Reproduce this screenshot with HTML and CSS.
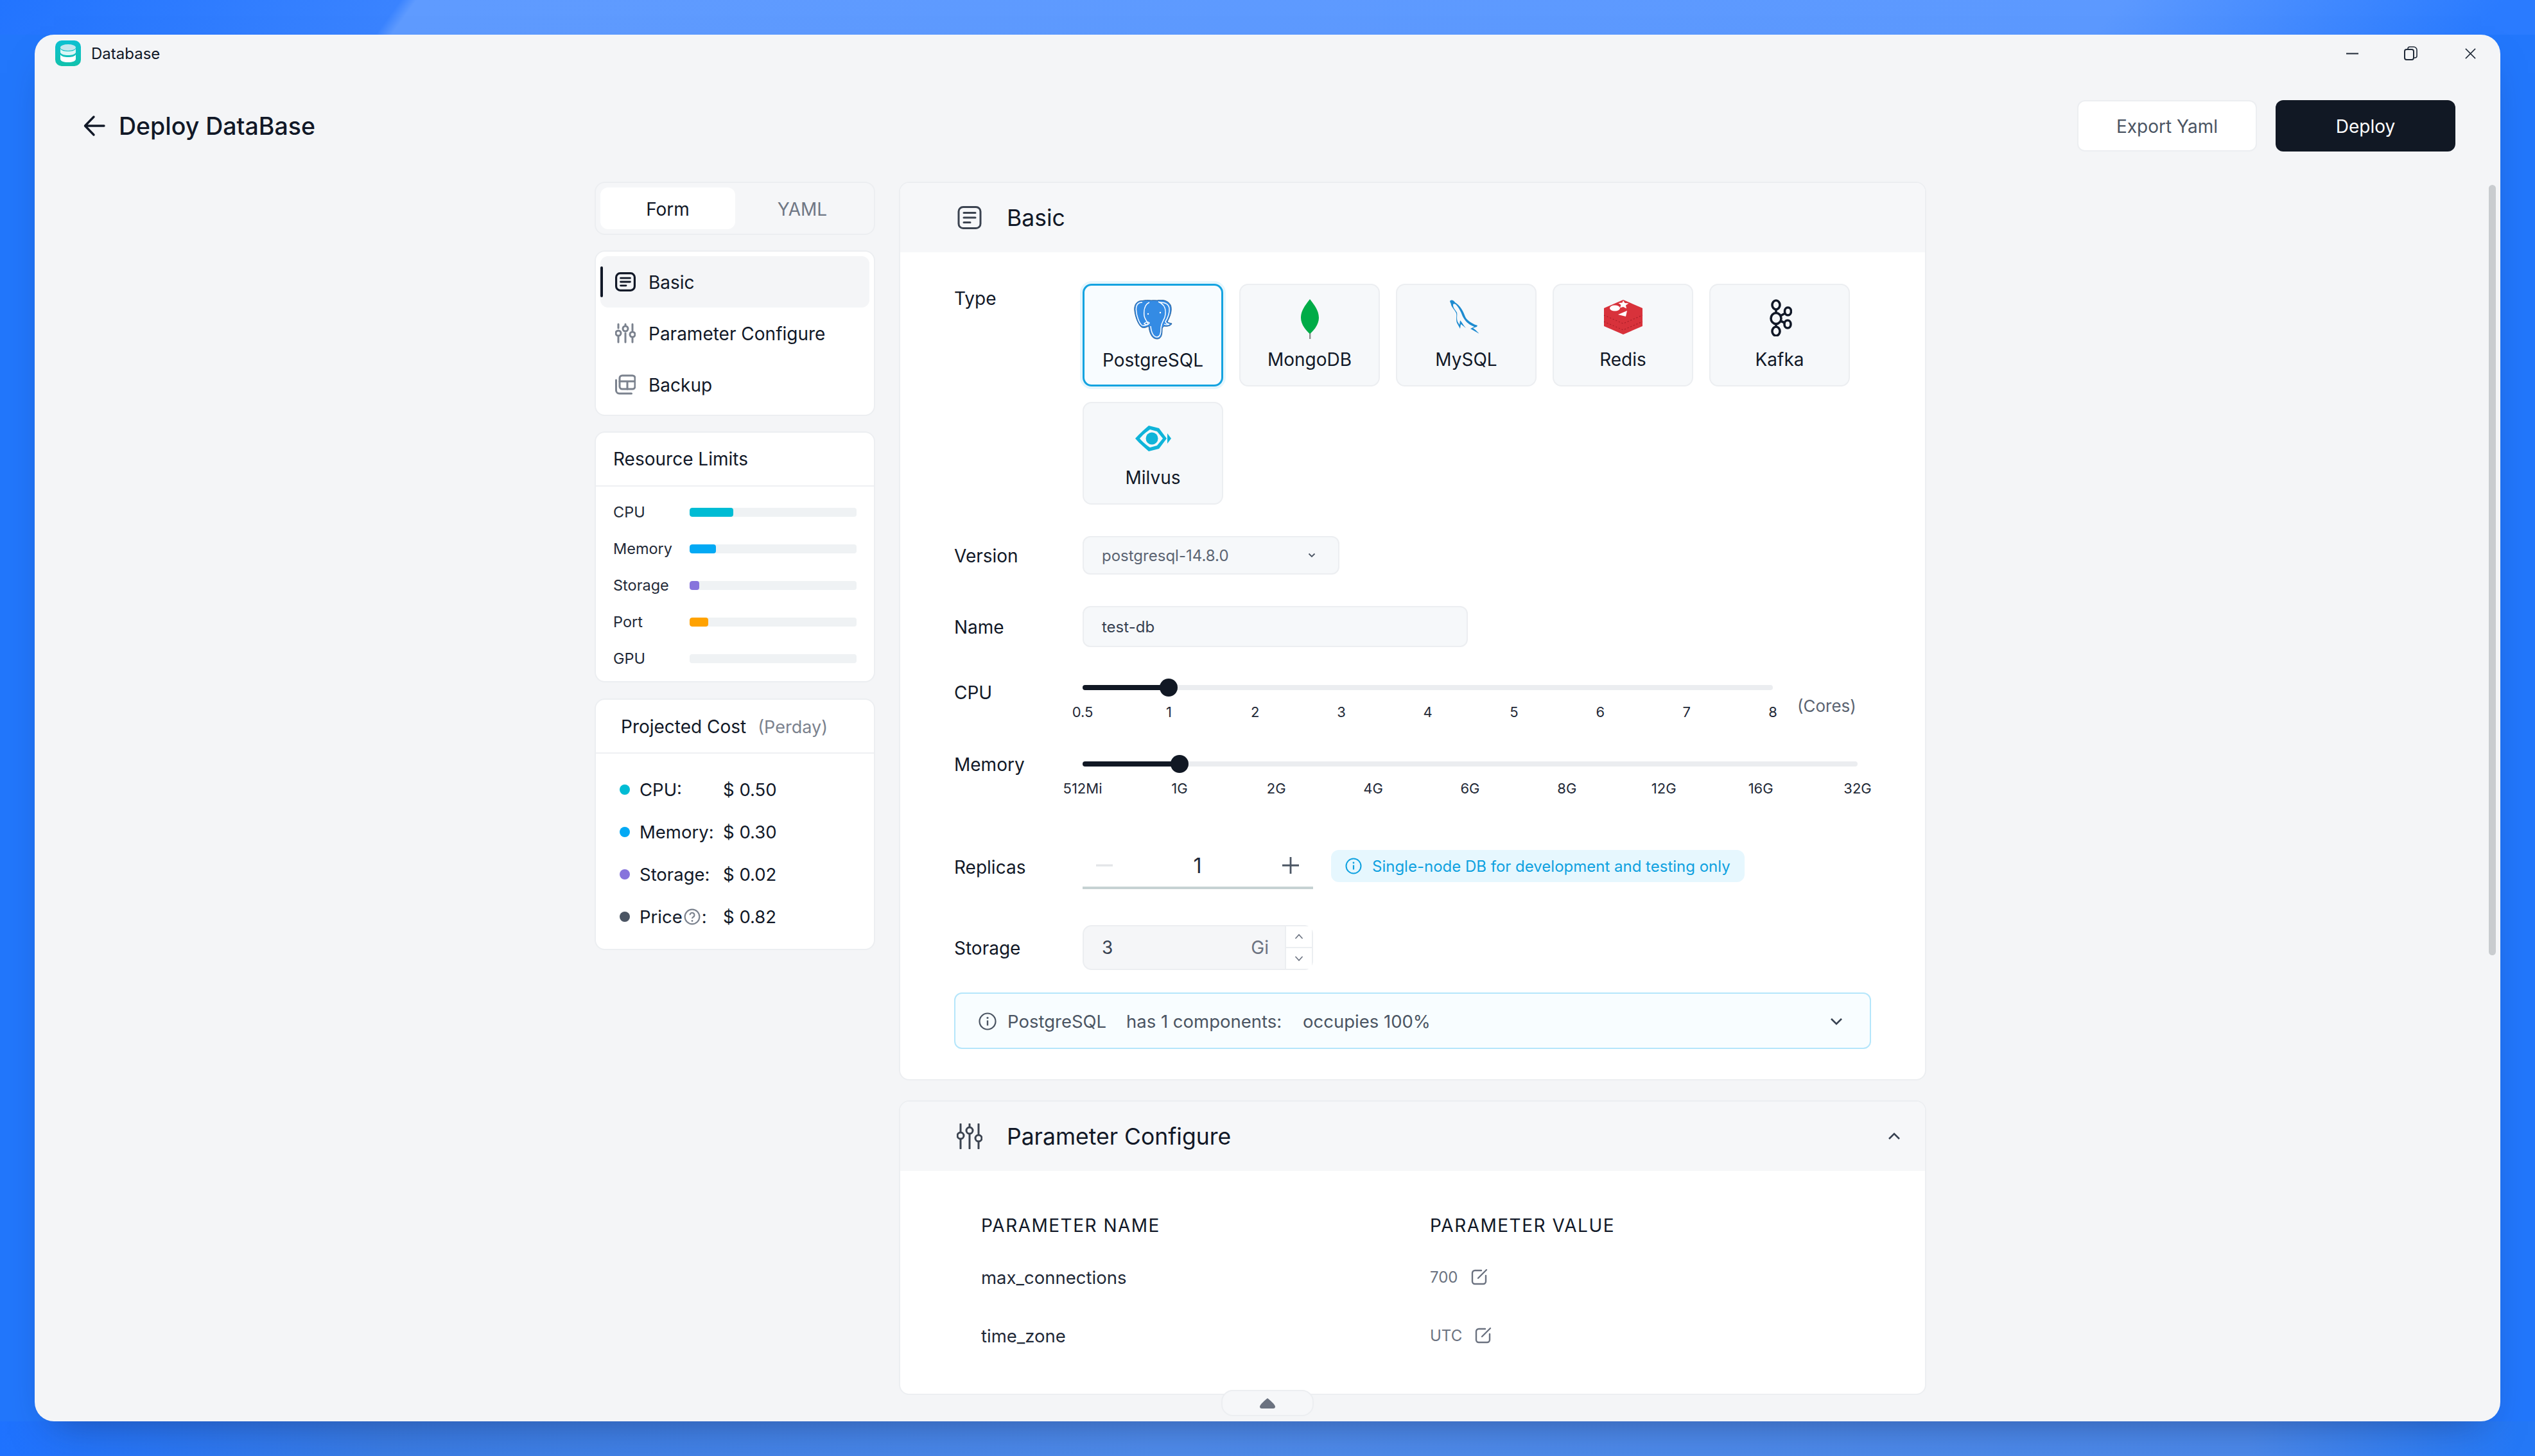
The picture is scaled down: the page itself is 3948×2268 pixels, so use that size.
FILE: index.html
```html
<!DOCTYPE html>
<html lang="en">
<head>
<meta charset="utf-8">
<title>Database</title>
<link rel="stylesheet" href="styles.css">
</head>
<body>
<div class="window">
  <div class="titlebar">
    <svg class="logo" viewBox="0 0 40 40"><defs><linearGradient id="lg" x1="0" y1="0" x2="0" y2="1"><stop offset="0" stop-color="#0cc0d2"/><stop offset="1" stop-color="#12c2ac"/></linearGradient></defs><rect width="40" height="40" rx="10" fill="url(#lg)"/><ellipse cx="20" cy="11" rx="12" ry="5" fill="#c5e6ee"/><path d="M8 13c2 3 6 4 12 4s10-1 12-4v6c-2 3-6 4-12 4s-10-1-12-4z" fill="#fff" opacity=".85"/><path d="M8 22c2 3 6 4 12 4s10-1 12-4v7c0 3-5 5-12 5s-12-2-12-5z" fill="#fff"/></svg>
    <span class="app-name">Database</span>
    <div class="win-controls">
      <svg class="wc wc-min" viewBox="0 0 20 20"><path d="M0 10h20" stroke="#1f2937" stroke-width="2"/></svg>
      <svg class="wc wc-res" viewBox="0 0 22 22"><rect x="1" y="5" width="14" height="16" rx="3" fill="none" stroke="#1f2937" stroke-width="2"/><path d="M6 5V4a3 3 0 0 1 3-3h6a5 5 0 0 1 5 5v9a3 3 0 0 1-3 3h-2" fill="none" stroke="#1f2937" stroke-width="1.6"/></svg>
      <svg class="wc wc-close" viewBox="0 0 20 20"><path d="M2 2l16 16M18 2L2 18" stroke="#1f2937" stroke-width="1.6"/></svg>
    </div>
  </div>

  <header class="page-head">
    <svg class="back" viewBox="0 0 34 34"><path d="M32 17H3M16 3L2.500 17 16 31" fill="none" stroke="#111827" stroke-width="3.400" stroke-linecap="round" stroke-linejoin="round"/></svg>
    <h1 class="page-title">Deploy DataBase</h1>
    <div class="head-actions">
      <button class="btn btn-light">Export Yaml</button>
      <button class="btn btn-dark">Deploy</button>
    </div>
  </header>

  <main class="layout">
    <aside class="side">
      <div class="tabs">
        <div class="tab tab-on">Form</div>
        <div class="tab">YAML</div>
      </div>

      <nav class="panel nav">
        <div class="nav-item nav-on">
          <svg class="nav-icon" viewBox="0 0 30 30"><rect x="1.500" y="2.500" width="27" height="25" rx="6" fill="none" stroke="#111827" stroke-width="3"/><path d="M8 9.500h14M8 15h14M8 20.500h8" stroke="#111827" stroke-width="2.600" stroke-linecap="round"/></svg>
          <span>Basic</span>
        </div>
        <div class="nav-item">
          <svg class="nav-icon" viewBox="0 0 32 32"><g fill="none" stroke="#7b828e" stroke-width="3" stroke-linecap="round"><path d="M5 2v6M16 2v2M27 2v10M5 22v8M16 16v14M27 24v6"/><circle cx="5" cy="16" r="4"/><circle cx="16" cy="9" r="4"/><circle cx="27" cy="18" r="4"/></g></svg>
          <span>Parameter Configure</span>
        </div>
        <div class="nav-item">
          <svg class="nav-icon" viewBox="0 0 32 32"><g fill="none" stroke="#7b828e" stroke-width="3" stroke-linejoin="round" stroke-linecap="round"><rect x="7" y="2" width="24" height="21" rx="4"/><path d="M7 11h24M19 11v12"/><path d="M1.500 9v16a5 5 0 0 0 5 5h19"/></g></svg>
          <span>Backup</span>
        </div>
      </nav>

      <section class="panel limits">
        <div class="panel-title limits-title">Resource Limits</div>
        <div class="limit-list">
          <div class="limit"><span class="limit-name">CPU</span><div class="bar"><i class="c-cpu" style="width:68px"></i></div></div>
          <div class="limit"><span class="limit-name">Memory</span><div class="bar"><i class="c-mem" style="width:41px"></i></div></div>
          <div class="limit"><span class="limit-name">Storage</span><div class="bar"><i class="c-sto" style="width:15px"></i></div></div>
          <div class="limit"><span class="limit-name">Port</span><div class="bar"><i class="c-port" style="width:29px"></i></div></div>
          <div class="limit"><span class="limit-name">GPU</span><div class="bar"></div></div>
        </div>
      </section>

      <section class="panel cost">
        <div class="panel-title cost-title">Projected Cost <span class="per">(Perday)</span></div>
        <div class="cost-list">
          <div class="cost-row"><b class="dot c-cpu"></b><span class="cost-name">CPU:</span><span>$ 0.50</span></div>
          <div class="cost-row"><b class="dot c-mem"></b><span class="cost-name">Memory:</span><span>$ 0.30</span></div>
          <div class="cost-row"><b class="dot c-sto"></b><span class="cost-name">Storage:</span><span>$ 0.02</span></div>
          <div class="cost-row"><b class="dot c-price"></b><span class="cost-name">Price<svg class="help" viewBox="0 0 24 24"><circle cx="12" cy="12" r="10.500" fill="none" stroke="#7b828e" stroke-width="2"/><path d="M8.800 9.500a3.200 3.200 0 1 1 4.900 2.700c-1.100.7-1.700 1.300-1.700 2.400" fill="none" stroke="#7b828e" stroke-width="2"/><circle cx="12" cy="18" r="1.300" fill="#7b828e"/></svg>:</span><span>$ 0.82</span></div>
        </div>
      </section>
    </aside>

    <div class="content">
      <section class="card card-basic">
        <div class="card-head">
          <svg class="head-icon" viewBox="0 0 40 40"><rect x="3" y="3.500" width="34" height="33" rx="7" fill="none" stroke="#3b4350" stroke-width="3"/><path d="M11 12.500h18M11 20h18M11 27.500h10" stroke="#3b4350" stroke-width="3" stroke-linecap="round"/></svg>
          <h2 class="card-title">Basic</h2>
        </div>
        <div class="form">
          <div class="row row-type">
            <label class="lbl lbl-type">Type</label>
            <div class="tiles">
              <div class="tile tile-on">
                <svg class="ti" width="60" height="62" viewBox="0 0 60 62"><path d="M13 1.500C5 1 .5 7 .8 15 1.200 24 6 38 11 42c4 3 8 1 12-1 1 9 4 20 13 20 7 0 8-7 8-15 0-2 1-4 3-5 6 1 11-1 12-4-3-1-6-1-7-3 5-9 8-19 5-26-4-7-13-9-21-7-3-.2-6-.5-9 0-5-.7-10-.5-14 .5z" fill="#348be4" stroke="#2f5f92" stroke-width="1"/><g fill="none" stroke="#fff" stroke-width="1.500"><path d="M13 4C5 4 3 10 3.500 16 4 25 8 36 12 39.500c3 2 7 0 10-1.500M24 4c-7 3-9 12-8 21 .6 5 5 9 6 13"/><path d="M38 3c10 4 13 13 10 24-2 6-6 9-6 18 0 7-1 13-6 13-6 0-9-8-10-17"/><path d="M40 4c7 0 14 2 15 9 1 6-2 15-6 21 1 3 4 4 6 4-2 1-6 1-8 0"/><path d="M16 37c3-3 6-3 8-1-1 3-5 4-8 1z"/></g><circle cx="22" cy="22" r="1.200" fill="#fff"/><circle cx="41" cy="20" r="1.200" fill="#fff"/></svg>
                <span>PostgreSQL</span>
              </div>
              <div class="tile">
                <svg class="ti" width="30" height="62" viewBox="0 0 30 62"><path d="M14 50h2.400v12H14z" fill="#8b8f8c"/><path d="M15 0C21 8 29 17 29 29c0 10-7 19-14 25C8 48 1 39 1 29 1 17 9 8 15 0z" fill="#00ac47"/></svg>
                <span>MongoDB</span>
              </div>
              <div class="tile">
                <svg class="ti" width="56" height="56" viewBox="0 0 56 56"><path d="M2 3C5 0 8 2 10 5c7 4 12 12 15 20 2 6 6 9 11 12 3 2 6 3 9 4l-1 2-6 2 4 3 6 6-7-4-7-4 6-3c-8-3-14-8-18-16-2-5-5-13-11-19-2-1-4-1-4 1 0 5 4 8 6 12 1 4-1 9 1 14l3 5 1-7c3 3 5 8 9 12-4-3-6-5-8-6l-1 7-5-9c-2-5 0-10-1-15-2-5-7-9-8-13-.3-2-.6-3-1-3z" fill="#1d8bd0"/></svg>
                <span>MySQL</span>
              </div>
              <div class="tile">
                <svg class="ti" width="62" height="56" viewBox="0 0 62 56"><path d="M31 1 61 14v28L31 55 1 42V14z" fill="#d8323b"/><path d="M1 25l30 13 30-13M1 35l30 13 30-13" fill="none" stroke="#a81f28" stroke-width="1.200" stroke-dasharray="2 3"/><ellipse cx="18" cy="14" rx="8" ry="4.500" fill="#fff"/><path d="M31 2l2.500 4 6 .5-4.500 3 1 5-5-2.500-5 1.500 1.500-4.500-4-3 6-.5z" fill="#fff"/><path d="M37 18l-2 9-12-3z" fill="#fff"/></svg>
                <span>Redis</span>
              </div>
              <div class="tile">
                <svg class="ti" width="38" height="58" viewBox="0 0 38 58"><g fill="none" stroke="#111827" stroke-width="3.600"><ellipse cx="13" cy="9" rx="6" ry="7"/><ellipse cx="31.500" cy="19" rx="5" ry="6"/><ellipse cx="13" cy="30" rx="8" ry="8.500"/><ellipse cx="31" cy="39" rx="5" ry="6"/><ellipse cx="13" cy="50" rx="6" ry="7"/><path d="M13 16v5M13 39v5M20 26l7-4M20 34l7 3"/></g></svg>
                <span>Kafka</span>
              </div>
              <div class="tile">
                <svg class="ti ti-milvus" width="58" height="42" viewBox="0 0 58 42"><path d="M22 1 38 5 50 21 38 37l-16 4C14 34 7 28 1 21 7 14 14 8 22 1z" fill="#0fb4d9"/><path d="M24 7 35 10 44 21 35 32 24 35C18 31 12 26 8 21 12 16 18 11 24 7z" fill="#f6f8fa"/><circle cx="27" cy="21" r="9.500" fill="#0fb4d9"/><path d="M51 13l6 8-6 8z" fill="#0fb4d9"/></svg>
                <span>Milvus</span>
              </div>
            </div>
          </div>

          <div class="row row-version">
            <label class="lbl">Version</label>
            <div class="select"><span>postgresql-14.8.0</span>
              <svg class="chev-s" viewBox="0 0 12 8"><path d="M1.500 1.500 6 6l4.500-4.500" fill="none" stroke="#4b5563" stroke-width="1.800"/></svg>
            </div>
          </div>

          <div class="row row-name">
            <label class="lbl">Name</label>
            <div class="input">test-db</div>
          </div>

          <div class="row row-cpu">
            <label class="lbl lbl-slider">CPU</label>
            <div class="slider slider-cpu">
              <div class="track"><i class="fill" style="width:12.5%"></i><b class="thumb" style="left:12.5%"></b></div>
              <div class="marks"><span>0.5</span><span>1</span><span>2</span><span>3</span><span>4</span><span>5</span><span>6</span><span>7</span><span>8</span></div>
            </div>
            <span class="unit">(Cores)</span>
          </div>

          <div class="row row-mem">
            <label class="lbl lbl-slider-mem">Memory</label>
            <div class="slider slider-mem">
              <div class="track"><i class="fill" style="width:12.5%"></i><b class="thumb" style="left:12.5%"></b></div>
              <div class="marks"><span>512Mi</span><span>1G</span><span>2G</span><span>4G</span><span>6G</span><span>8G</span><span>12G</span><span>16G</span><span>32G</span></div>
            </div>
          </div>

          <div class="row row-rep">
            <label class="lbl lbl-rep">Replicas</label>
            <div class="stepper">
              <svg class="st-ic" viewBox="0 0 24 24"><path d="M0 12h24" stroke="#e3e5e8" stroke-width="3"/></svg>
              <span class="st-val">1</span>
              <svg class="st-ic" viewBox="0 0 28 28"><path d="M0 14h28M14 0v28" stroke="#4b5563" stroke-width="3"/></svg>
            </div>
            <div class="pill">
              <svg class="pill-ic" viewBox="0 0 26 26"><circle cx="13" cy="13" r="11.500" fill="none" stroke="#0ea1e0" stroke-width="2"/><path d="M13 11.500v7" stroke="#0ea1e0" stroke-width="2.200"/><circle cx="13" cy="8" r="1.400" fill="#0ea1e0"/></svg>
              <span>Single-node DB for development and testing only</span>
            </div>
          </div>

          <div class="row row-sto">
            <label class="lbl">Storage</label>
            <div class="numbox">
              <span class="num-val">3</span><span class="num-unit">Gi</span>
              <div class="spin">
                <div class="spin-btn"><svg viewBox="0 0 14 10"><path d="M1.500 8 7 2l5.500 6" fill="none" stroke="#6b7280" stroke-width="1.600"/></svg></div>
                <div class="spin-btn"><svg viewBox="0 0 14 10"><path d="M1.500 2 7 8l5.500-6" fill="none" stroke="#6b7280" stroke-width="1.600"/></svg></div>
              </div>
            </div>
          </div>

          <div class="notice">
            <svg class="notice-ic" viewBox="0 0 28 28"><circle cx="14" cy="14" r="12.500" fill="none" stroke="#4b5563" stroke-width="2.200"/><path d="M14 12.500v8" stroke="#4b5563" stroke-width="2.400"/><circle cx="14" cy="8.500" r="1.600" fill="#4b5563"/></svg>
            <span class="n1">PostgreSQL</span><span class="n2">has 1 components:</span><span class="n3">occupies 100%</span>
            <svg class="notice-chev" viewBox="0 0 20 12"><path d="M2 2l8 8 8-8" fill="none" stroke="#374151" stroke-width="2.600"/></svg>
          </div>
        </div>
      </section>

      <section class="card card-param">
        <div class="card-head">
          <svg class="head-icon" viewBox="0 0 40 40"><g fill="none" stroke="#3b4350" stroke-width="3" stroke-linecap="round"><path d="M6 1v12M20 1v4M34 1v15M6 25v14M20 17v22M34 30v9"/><circle cx="6" cy="19" r="5"/><circle cx="20" cy="11" r="5"/><circle cx="34" cy="23" r="5"/></g></svg>
          <h2 class="card-title">Parameter Configure</h2>
          <svg class="collapse" viewBox="0 0 20 12"><path d="M2 10l8-8 8 8" fill="none" stroke="#374151" stroke-width="2.600"/></svg>
        </div>
        <div class="ptable">
          <div class="pth">Parameter Name</div><div class="pth">Parameter Value</div>
          <div class="ptd">max_connections</div>
          <div class="ptv"><span>700</span><svg class="edit" viewBox="0 0 26 26"><path d="M16 3H6a4 4 0 0 0-4 4v13a4 4 0 0 0 4 4h13a4 4 0 0 0 4-4V11" fill="none" stroke="#6b7280" stroke-width="2.400" stroke-linecap="round"/><path d="M11 15 24 2" stroke="#6b7280" stroke-width="2.400" stroke-linecap="round"/></svg></div>
          <div class="ptd">time_zone</div>
          <div class="ptv"><span>UTC</span><svg class="edit" viewBox="0 0 26 26"><path d="M16 3H6a4 4 0 0 0-4 4v13a4 4 0 0 0 4 4h13a4 4 0 0 0 4-4V11" fill="none" stroke="#6b7280" stroke-width="2.400" stroke-linecap="round"/><path d="M11 15 24 2" stroke="#6b7280" stroke-width="2.400" stroke-linecap="round"/></svg></div>
        </div>
      </section>
    </div>
  </main>

  <div class="scrollbar"></div>
  <div class="toggle"><svg viewBox="0 0 24 16"><path d="M12 0C15 2 24 10 24 13c0 2-1 3-3 3H3c-2 0-3-1-3-3C0 10 9 2 12 0z" fill="#6b7280"/></svg></div>
</div>
</body>
</html>
```
FILE: styles.css
```css
* { box-sizing: border-box; }
html, body { margin: 0; width: 3948px; height: 2268px; overflow: hidden; }
body {
  font-family: Inter, "Liberation Sans", sans-serif;
  color: #111827;
  padding: 54px;
  background:
    linear-gradient(to right, #1e72ff 0, #3a7ce4 600px, #4f8bea 1800px, #4c89ea 3500px, #2478f6 3920px) left bottom / 100% 54px no-repeat,
    linear-gradient(126deg, #2274ff 0, #3a83ff 505px, #5f9bff 525px, #5c99ff 2670px, #2a7bff 3155px) left top / 100% 54px no-repeat,
    #2277fc;
}
.window {
  position: relative;
  width: 3840px;
  height: 2160px;
  background: #f4f5f7;
  border-radius: 30px;
  overflow: hidden;
  box-shadow: 0 30px 60px -30px rgba(20, 40, 90, .5);
}
.titlebar { display: flex; align-items: center; height: 58px; padding: 0 37px 0 32px; }
.logo { width: 40px; height: 40px; }
.app-name { margin-left: 16px; font-size: 24px; }
.win-controls { margin-left: auto; display: flex; align-items: center; }
.wc { display: block; }
.wc-min { width: 19px; height: 19px; }
.wc-res { width: 22px; height: 22px; margin-left: 71px; }
.wc-close { width: 19px; height: 19px; margin-left: 72px; }

.page-head { display: flex; align-items: center; height: 80px; margin-top: 44px; padding: 0 70px 0 76px; }
.back { width: 34px; height: 34px; }
.page-title { margin: 2px 0 0 21px; font-size: 37.500px; line-height: 50px; font-weight: 500; }
.head-actions { margin-left: auto; display: flex; gap: 29px; }
.btn { width: 280px; height: 80px; padding-top: 2px; border-radius: 12px; font: 400 28px Inter, sans-serif; }
.btn-light { background: #fff; color: #4b5563; border: 2px solid #eceef1; }
.btn-dark { background: #111824; color: #fff; border: 0; }

.layout { display: flex; gap: 37px; margin-top: 47px; padding-left: 872px; align-items: flex-start; }
.side { width: 437px; display: flex; flex-direction: column; }

.tabs { display: flex; height: 83px; padding: 7px; background: #f5f6f8; border: 2px solid #eceef1; border-radius: 16px; }
.tab { flex: 1; display: flex; align-items: center; justify-content: center; padding-top: 2px; font-size: 28px; font-weight: 400; color: #6f7785; border-radius: 12px; }
.tab-on { flex: none; width: 210px; background: #fff; color: #111827; }
.panel { background: #fff; border: 2px solid #eceef1; border-radius: 16px; margin-top: 24px; }
.nav { height: 258px; padding: 7px; }
.nav-item { position: relative; display: flex; align-items: center; height: 80px; padding: 2px 0 0 23px; font-size: 28px; font-weight: 400; border-radius: 12px; }
.nav-item span { margin-left: 20px; }
.nav-icon { width: 32px; height: 32px; margin-top: -2px; }
.nav-on { background: #f4f5f7; }
.nav-on::before { content: ""; position: absolute; left: 0; top: 16px; width: 4px; height: 48px; border-radius: 2px; background: #111827; }

.panel-title { font-size: 28px; font-weight: 400; display: flex; align-items: center; border-bottom: 2px solid #eef0f3; }
.limits { height: 391px; }
.limits-title { height: 84px; padding-left: 27px; }
.limit-list { padding-top: 11px; }
.limit { display: flex; align-items: center; height: 57px; padding-left: 27px; }
.limit-name { width: 119px; font-size: 23.500px; color: #1f2937; }
.bar { width: 260px; height: 14px; border-radius: 4px; background: #eff2f4; overflow: hidden; }
.bar i { display: block; height: 100%; border-radius: 4px; }
.c-cpu { background: #00bcd4; }
.c-mem { background: #03a9f4; }
.c-sto { background: #8774dc; }
.c-port { background: #ffa200; }
.c-price { background: #4b5563; }

.cost { height: 392px; margin-top: 25px; }
.cost-title { height: 84px; padding-left: 39px; padding-top: 2px; }
.per { margin-left: 18px; font-weight: 400; font-size: 27px; color: #7b828e; }
.cost-list { padding-top: 23px; }
.cost-row { display: flex; align-items: center; height: 66px; padding-left: 37px; font-size: 27.500px; }
.dot { width: 16px; height: 16px; border-radius: 50%; margin-right: 15px; }
.cost-name { width: 130px; display: flex; align-items: center; }
.help { width: 26px; height: 26px; margin: 0 2px; }

.content { width: 1600px; display: flex; flex-direction: column; gap: 31px; }
.card { background: #fff; border: 2px solid #eceef1; border-radius: 16px; overflow: hidden; }
.card-head { display: flex; align-items: center; height: 108px; padding: 0 38px 0 88px; background: #f6f7f9; }
.head-icon { width: 40px; height: 40px; }
.card-title { margin: 2px 0 0 38px; font-size: 35.500px; line-height: 46px; font-weight: 400; }
.collapse { width: 20px; height: 12px; margin-left: auto; }

.form { padding: 49px 84px 47px; }
.row { display: flex; align-items: center; }
.lbl { width: 200px; font-size: 28px; line-height: 40px; font-weight: 400; flex: none; }
.row-type { align-items: flex-start; }
.lbl-type { margin-top: 3px; }
.lbl-rep { margin-top: -6px; }
.row-version .lbl, .row-name .lbl, .row-sto .lbl { margin-top: 2px; }
.tiles { display: flex; flex-wrap: wrap; gap: 24px 25px; width: 1240px; }
.tile { position: relative; width: 219px; height: 160px; display: flex; flex-direction: column; align-items: center; background: #f6f8fa; border: 2px solid #eceef1; border-radius: 14px; font-size: 28px; font-weight: 400; }
.tile span { position: absolute; top: 96px; line-height: 40px; }
.ti { position: absolute; top: 22px; }
.ti-milvus { top: 34px; }
.tile-on { background: #f8fcff; border: 3px solid #15a3e0; box-shadow: 0 0 0 4px #e6f6fd; }

.row-version { margin-top: 49px; }
.select { width: 400px; height: 60px; display: flex; align-items: center; padding: 0 28px; font-size: 24px; color: #5b6472; background: #f6f8fa; border: 2px solid #eceef1; border-radius: 12px; }
.chev-s { width: 12px; height: 8px; margin-left: auto; margin-right: 7px; }
.row-name { margin-top: 49px; }
.input { width: 600px; height: 64px; display: flex; align-items: center; padding: 0 28px; font-size: 24px; color: #374151; background: #f6f8fa; border: 2px solid #eceef1; border-radius: 12px; }

.row-cpu, .row-mem { align-items: flex-start; }
.row-cpu { margin-top: 42px; height: 90px; }
.row-mem { margin-top: 29px; height: 91px; }
.lbl-slider { margin-top: 9px; }
.lbl-slider-mem { margin-top: 2px; }
.slider { flex: none; padding-top: 17px; }
.slider-cpu { width: 1075px; }
.slider-mem { width: 1207px; }
.track { position: relative; height: 8px; background: #ebedf0; border-radius: 4px; }
.fill { display: block; height: 100%; background: #111824; border-radius: 4px; }
.thumb { position: absolute; top: -10px; width: 28px; height: 28px; margin-left: -14px; border-radius: 50%; background: #111824; }
.marks { display: flex; justify-content: space-between; margin-top: 20px; }
.marks span { width: 0; display: flex; justify-content: center; white-space: nowrap; font-size: 22px; line-height: 28px; color: #1f2937; }
.unit { margin: 30px 0 0 38px; font-size: 26px; line-height: 40px; color: #5b6472; }

.row-rep { margin-top: 63px; }
.stepper { width: 359px; height: 62px; display: flex; align-items: center; justify-content: space-between; padding: 0 22px 8px 21px; border-bottom: 4px solid #c6d2d3; }
.st-ic { width: 26px; height: 26px; }
.st-val { font-size: 32px; font-weight: 400; color: #1f2937; }
.pill { display: flex; align-items: center; height: 50px; margin: -10px 0 0 28px; padding: 0 22px; background: #e6f7fe; border-radius: 12px; color: #0ea1e0; font-size: 24px; }
.pill-ic { width: 26px; height: 26px; margin-right: 16px; }

.row-sto { margin-top: 56px; }
.numbox { position: relative; width: 359px; height: 70px; display: flex; align-items: center; padding-left: 28px; background: #f5f6f8; border: 2px solid #eceef1; border-radius: 14px; font-size: 28px; }
.num-val { color: #374151; }
.num-unit { margin-left: auto; margin-right: 67px; color: #6b7280; }
.spin { position: absolute; top: 0; right: 0; bottom: 0; width: 42px; display: flex; flex-direction: column; background: #fff; border-left: 2px solid #eceef1; }
.spin-btn { flex: 1; display: flex; align-items: center; justify-content: center; }
.spin-btn + .spin-btn { border-top: 2px solid #eceef1; }
.spin-btn svg { width: 14px; height: 10px; }

.notice { display: flex; align-items: center; height: 88px; margin-top: 35px; padding: 2px 42px 0 36px; background: #f8fdff; border: 2px solid #b5e6fb; border-radius: 12px; font-size: 27.500px; color: #4b5563; }
.notice-ic { width: 28px; height: 28px; flex: none; }
.n1 { margin-left: 17px; width: 185px; }
.n2 { width: 275px; }
.notice-chev { width: 20px; height: 12px; margin-left: auto; }

.ptable { display: grid; grid-template-columns: 699px auto; padding: 62px 0 0 126px; grid-auto-rows: 91px; height: 347px; }
.pth { font-size: 28px; font-weight: 400; text-transform: uppercase; letter-spacing: 1.500px; line-height: 40px; height: 40px; margin-top: 3px; }
.ptable > .ptd, .ptable > .ptv { display: flex; align-items: flex-start; line-height: 40px; }
.ptd { font-size: 27.500px; color: #1f2937; margin-top: -7px; }
.ptv { font-size: 24px; color: #6b7280; margin-top: -7px; }
.edit { width: 26px; height: 26px; margin: 6px 0 0 20px; }

.scrollbar { position: absolute; left: 3822px; top: 234px; width: 11px; height: 1200px; border-radius: 6px; background: #c9cccf; }
.toggle { position: absolute; left: 1848px; top: 2111px; width: 144px; height: 41px; display: flex; align-items: center; justify-content: center; background: #f6f7f9; border: 2px solid #eceef1; border-radius: 18px; }
.toggle svg { width: 24px; height: 16px; }
```
